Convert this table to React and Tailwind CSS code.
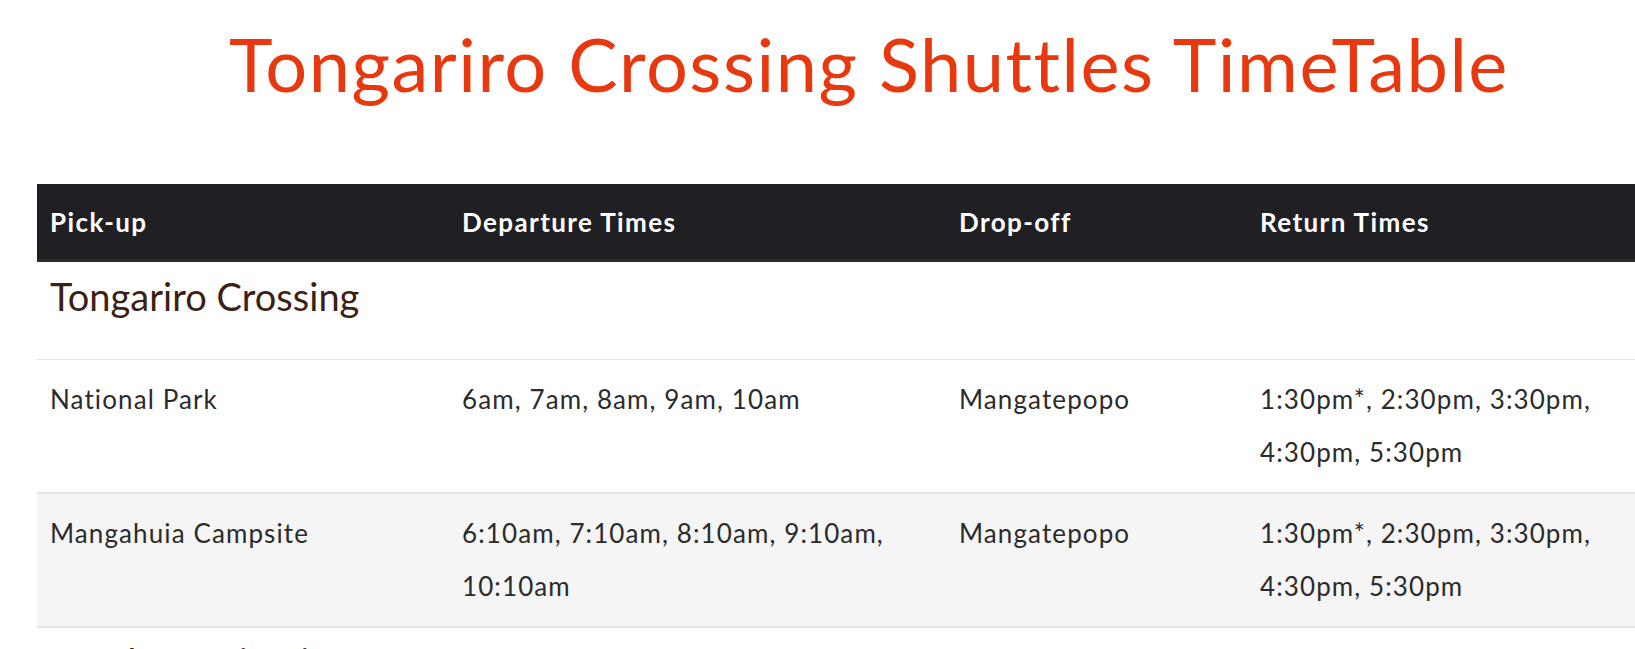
const columns = ['Pick-up', 'Departure Times', 'Drop-off', 'Return Times']

const sections = [
  {
    title: 'Tongariro Crossing',
    rows: [
      {
        pickup: 'National Park',
        departs: '6am, 7am, 8am, 9am, 10am',
        dropoff: 'Mangatepopo',
        returns: '1:30pm*, 2:30pm, 3:30pm, 4:30pm, 5:30pm',
      },
      {
        pickup: 'Mangahuia Campsite',
        departs: '6:10am, 7:10am, 8:10am, 9:10am, 10:10am',
        dropoff: 'Mangatepopo',
        returns: '1:30pm*, 2:30pm, 3:30pm, 4:30pm, 5:30pm',
      },
    ],
  },
  { title: 'Northern Circuit', rows: [] },
]

const grid = 'grid grid-cols-[412px_497px_301px_454px]'

export default function App() {
  return (
    <div className="w-[1635px] h-[649px] overflow-hidden bg-white font-['Lato','Noto_Sans',sans-serif]">
      <div className="ml-[37px] w-[1664px]">
        <h1 className="pt-[28px] text-center text-[74px] leading-[72px] tracking-[1.5px] text-[#e8380f]">
          Tongariro Crossing Shuttles TimeTable
        </h1>

        <div className={`${grid} mt-[84px] h-[78px] items-center bg-[#202024] border-b-[3px] border-[#2d2e2b] text-[26px] font-bold tracking-[1.4px] text-white`}>
          {columns.map(c => (
            <div key={c} className="px-[13px] pt-[2px]">{c}</div>
          ))}
        </div>

        {sections.map(s => (
          <div key={s.title}>
            <div className="h-[98px] border-b border-[#e3e3e3] px-[13px] pt-[11px] text-[38px] leading-[46px] text-[#3d1f16]">
              {s.title}
            </div>
            {s.rows.map((r, i) => (
              <div
                key={r.pickup}
                className={`${grid} border-b-2 border-[#e6e6e6] pt-[13px] pb-[13px] text-[26px] leading-[53px] tracking-[1.1px] text-[#2b2b2b] ${i % 2 === 1 ? 'bg-[#f5f5f5]' : 'bg-white'}`}
              >
                <div className="px-[13px]">{r.pickup}</div>
                <div className="px-[13px]">{r.departs}</div>
                <div className="px-[13px]">{r.dropoff}</div>
                <div className="px-[13px] pr-[80px]">{r.returns}</div>
              </div>
            ))}
          </div>
        ))}
      </div>
    </div>
  )
}
